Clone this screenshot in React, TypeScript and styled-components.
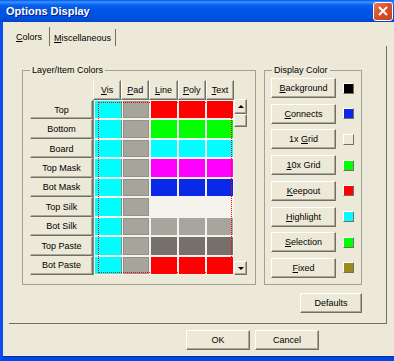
import styled, { createGlobalStyle, css } from "styled-components";

const FACE = "#ece9d8";
const SHADOW = "#716f64";
const SOFT = "#aca899";
const GRID = "#f3f2ec";

const GlobalStyle = createGlobalStyle`
  html, body {
    margin: 0;
    padding: 0;
    background: ${FACE};
  }
  body {
    font-family: "Liberation Sans", Arial, sans-serif;
    font-size: 9px;
    color: #000;
  }
`;

const raised = css`
  box-sizing: border-box;
  border: 1px solid;
  border-color: #fff ${SHADOW} ${SHADOW} #fff;
  box-shadow: inset -1px -1px ${SOFT};
  background: ${FACE};
`;

const Window = styled.div`
  width: 394px;
  height: 361px;
  display: flex;
  flex-direction: column;
  overflow: hidden;
`;

const TitleBar = styled.div`
  flex: none;
  height: 22px;
  box-sizing: border-box;
  display: flex;
  align-items: center;
  justify-content: space-between;
  padding: 0 1px 0 6px;
  background: linear-gradient(
    180deg,
    #0058ee 0px,
    #3a93ff 2px,
    #0a61ec 5px,
    #0055e5 10px,
    #0050e0 18px,
    #0043c8 22px
  );
  color: #fff;
  font: bold 11px "Liberation Sans", Arial, sans-serif;
  text-shadow: 1px 1px #0a1e8c;
`;

const CloseButton = styled.div`
  width: 20px;
  height: 19px;
  box-sizing: border-box;
  border: 1px solid #fff;
  border-radius: 3px;
  background: linear-gradient(135deg, #e97b5c 0%, #d9512c 45%, #c4401d 100%);
  display: flex;
  align-items: center;
  justify-content: center;
`;

const Client = styled.div`
  flex: 1;
  display: flex;
  flex-direction: column;
  background: ${FACE};
  border-left: 3px solid #0a50f0;
  border-bottom: 4px solid #0046e0;
  box-shadow: inset 0 -1px #0030a8;
  padding: 5px 0 0 6px;
`;

const TabStrip = styled.div`
  display: flex;
  align-items: flex-end;
  height: 19px;
`;

const Tab = styled.div<{ $active?: boolean }>`
  height: ${(p) => (p.$active ? 19 : 17)}px;
  padding: 0 ${(p) => (p.$active ? 7 : 4)}px;
  display: flex;
  align-items: center;
  border-right: 1px solid ${SHADOW};
  box-sizing: border-box;
`;

const Panel = styled.div`
  width: 378px;
  height: 278px;
  box-sizing: border-box;
  border-right: 1px solid ${SHADOW};
  border-bottom: 1px solid ${SHADOW};
  padding: 24px 24px 0 13px;
  display: flex;
  flex-direction: column;
`;

const GroupRow = styled.div`
  display: flex;
  gap: 8px;
`;

const GroupBox = styled.div<{ $width: number }>`
  position: relative;
  width: ${(p) => p.$width}px;
  height: 215px;
  box-sizing: border-box;
  border: 1px solid #a3a194;
`;

const Caption = styled.span`
  position: absolute;
  top: -7px;
  left: 7px;
  padding: 0 2px;
  background: ${FACE};
  line-height: 12px;
`;

const LayerGrid = styled.div`
  display: grid;
  grid-template-columns: 63px 141px 13px;
  grid-template-rows: 20px 175px;
  padding: 9px 0 0 7px;
`;

const HeaderRow = styled.div`
  grid-column: 2;
  display: grid;
  grid-template-columns: repeat(5, 1fr);
`;

const HeaderCell = styled.div`
  ${raised};
  display: flex;
  align-items: center;
  justify-content: center;
  border-top-color: ${FACE};
`;

const LabelColumn = styled.div`
  grid-column: 1;
  display: grid;
  grid-template-rows: repeat(9, 1fr);
`;

const RowLabel = styled.div`
  ${raised};
  border-top-color: ${FACE};
  border-left-color: ${FACE};
  display: flex;
  align-items: center;
  justify-content: center;
`;

const CellGrid = styled.div`
  position: relative;
  display: grid;
  grid-template-columns: repeat(5, 1fr);
  grid-template-rows: repeat(9, 1fr);
  background: ${GRID};
  border-left: 1px solid #8d8a80;
`;

const Cell = styled.div<{ $fill: string; $sep?: boolean; $framed?: boolean }>`
  margin: 1px 1px 1px 1px;
  background: ${(p) => p.$fill};
  box-shadow: ${(p) => (p.$framed ? "inset 0 0 0 1px #94918a" : "none")};
  ${(p) => p.$sep && "border-right: 1px solid #8d8a80; margin-right: 0;"}
`;

const FocusRing = styled.div`
  position: absolute;
  inset: 2px 2px 2px 4px;
  border: 1px dotted #ff0000;
  pointer-events: none;
`;

const ScrollBar = styled.div`
  display: flex;
  flex-direction: column;
  margin-top: -1px;
`;

const ScrollButton = styled.div<{ $h: number }>`
  ${raised};
  height: ${(p) => p.$h}px;
  display: flex;
  align-items: center;
  justify-content: center;
`;

const Track = styled.div`
  flex: 1;
`;

const Arrow = styled.span<{ $down?: boolean }>`
  width: 0;
  height: 0;
  border-left: 3px solid transparent;
  border-right: 3px solid transparent;
  ${(p) =>
    p.$down ? "border-top: 3px solid #000;" : "border-bottom: 3px solid #000;"}
`;

const ColorList = styled.div`
  height: 200px;
  display: flex;
  flex-direction: column;
  justify-content: space-between;
  padding: 7px 0 0 6px;
`;

const ColorRow = styled.div`
  display: flex;
  align-items: center;
  gap: 7px;
`;

const Button = styled.div<{ $w: number }>`
  ${raised};
  width: ${(p) => p.$w}px;
  height: 20px;
  display: flex;
  align-items: center;
  justify-content: center;
`;

const Swatch = styled.div<{ $fill: string }>`
  width: 11px;
  height: 11px;
  box-sizing: border-box;
  border: 1px solid;
  border-color: #fff ${SHADOW} ${SHADOW} #fff;
  background: ${(p) => p.$fill};
`;

const DefaultsRow = styled.div`
  display: flex;
  justify-content: flex-end;
  margin-top: 8px;
`;

const Footer = styled.div`
  display: flex;
  justify-content: flex-end;
  gap: 5px;
  margin-top: 6px;
  padding-right: 75px;
`;

const U = styled.span`
  text-decoration: underline;
`;

const Mnemonic = ({ text, at = 0 }: { text: string; at?: number }) => (
  <span>
    {text.slice(0, at)}
    <U>{text[at]}</U>
    {text.slice(at + 1)}
  </span>
);

const CY = "#00ffff";
const PAD = "#a7a49b";
const R = "#ff0000";
const G = "#00ff00";

const layers: { name: string; fills: string[] }[] = [
  { name: "Top", fills: [CY, PAD, R, R, R] },
  { name: "Bottom", fills: [CY, PAD, G, G, G] },
  { name: "Board", fills: [CY, PAD, CY, CY, CY] },
  { name: "Top Mask", fills: [CY, PAD, "#ff00ff", "#ff00ff", "#ff00ff"] },
  { name: "Bot Mask", fills: [CY, PAD, "#0a28e8", "#0a28e8", "#0a28e8"] },
  { name: "Top Silk", fills: [CY, PAD, "#f4f3ee", "#f4f3ee", "#f4f3ee"] },
  { name: "Bot Silk", fills: [CY, PAD, "#a8a59c", "#a8a59c", "#a8a59c"] },
  { name: "Top Paste", fills: [CY, PAD, "#76706a", "#76706a", "#76706a"] },
  { name: "Bot Paste", fills: [CY, PAD, R, R, R] },
];

const headers = ["Vis", "Pad", "Line", "Poly", "Text"];

const displayColors = [
  { label: "Background", at: 0, fill: "#000000" },
  { label: "Connects", at: 0, fill: "#0a28e8" },
  { label: "1x Grid", at: 3, fill: FACE },
  { label: "10x Grid", at: 0, fill: G },
  { label: "Keepout", at: 0, fill: R },
  { label: "Highlight", at: 0, fill: CY },
  { label: "Selection", at: 0, fill: G },
  { label: "Fixed", at: 0, fill: "#9c8a1e" },
];

const App = () => (
  <>
    <GlobalStyle />
    <Window>
      <TitleBar>
        <span>Options Display</span>
        <CloseButton>
          <svg width="10" height="10" viewBox="0 0 10 10">
            <path d="M1 1 L9 9 M9 1 L1 9" stroke="#fff" strokeWidth="2" />
          </svg>
        </CloseButton>
      </TitleBar>
      <Client>
        <TabStrip>
          <Tab $active>
            <Mnemonic text="Colors" />
          </Tab>
          <Tab>
            <Mnemonic text="Miscellaneous" />
          </Tab>
        </TabStrip>
        <Panel>
          <GroupRow>
            <GroupBox $width={234}>
              <Caption>Layer/Item Colors</Caption>
              <LayerGrid>
                <HeaderRow>
                  {headers.map((h) => (
                    <HeaderCell key={h}>
                      <Mnemonic text={h} />
                    </HeaderCell>
                  ))}
                </HeaderRow>
                <span />
                <LabelColumn>
                  {layers.map((l) => (
                    <RowLabel key={l.name}>{l.name}</RowLabel>
                  ))}
                </LabelColumn>
                <CellGrid>
                  {layers.map((l) =>
                    l.fills.map((f, i) => (
                      <Cell
                        key={l.name + i}
                        $fill={f}
                        $sep={i === 0}
                        $framed={i === 1}
                      />
                    ))
                  )}
                  <FocusRing />
                </CellGrid>
                <ScrollBar>
                  <ScrollButton $h={15}>
                    <Arrow />
                  </ScrollButton>
                  <ScrollButton $h={13} />
                  <Track />
                  <ScrollButton $h={14}>
                    <Arrow $down />
                  </ScrollButton>
                </ScrollBar>
              </LayerGrid>
            </GroupBox>
            <GroupBox $width={98}>
              <Caption>Display Color</Caption>
              <ColorList>
                {displayColors.map((c) => (
                  <ColorRow key={c.label}>
                    <Button $w={65}>
                      <Mnemonic text={c.label} at={c.at} />
                    </Button>
                    <Swatch $fill={c.fill} />
                  </ColorRow>
                ))}
              </ColorList>
            </GroupBox>
          </GroupRow>
          <DefaultsRow>
            <Button $w={62}>Defaults</Button>
          </DefaultsRow>
        </Panel>
        <Footer>
          <Button $w={64}>OK</Button>
          <Button $w={64}>Cancel</Button>
        </Footer>
      </Client>
    </Window>
  </>
);

export default App;
